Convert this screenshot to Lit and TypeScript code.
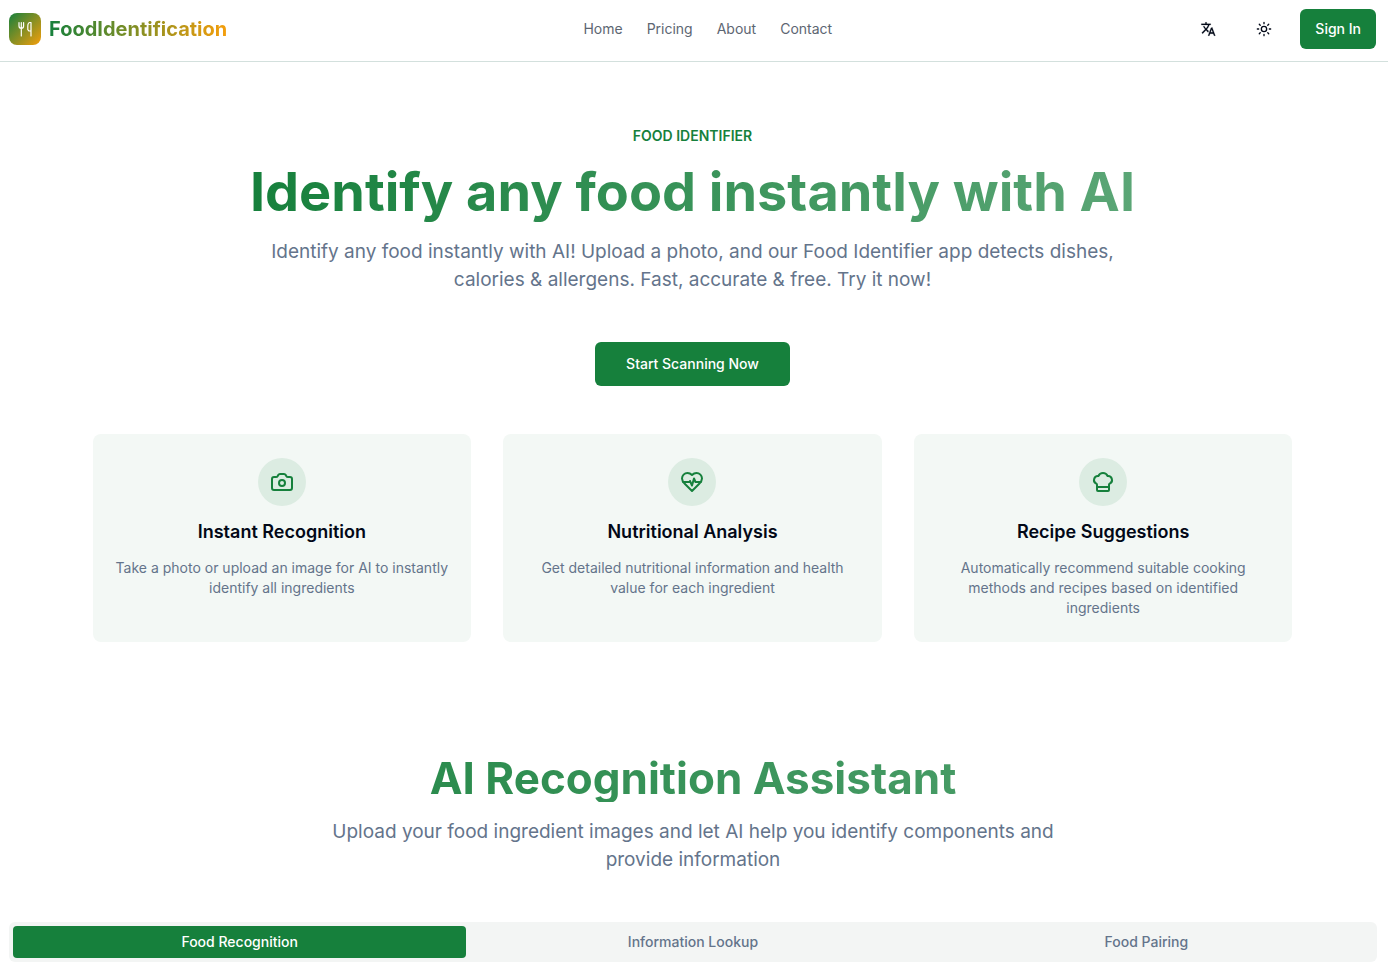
import { LitElement, html, css, svg } from "lit";
import { customElement, state } from "lit/decorators.js";
import { classMap } from "lit/directives/class-map.js";

const camera = svg`
  <path d="M13.997 4a2 2 0 0 1 1.76 1.05l.486.9A2 2 0 0 0 18.003 7H20a2 2 0 0 1 2 2v9a2 2 0 0 1-2 2H4a2 2 0 0 1-2-2V9a2 2 0 0 1 2-2h1.997a2 2 0 0 0 1.759-1.048l.489-.904A2 2 0 0 1 10.004 4z"></path>
  <circle cx="12" cy="13" r="3"></circle>`;

const heartPulse = svg`
  <path d="M19 14c1.49-1.46 3-3.21 3-5.5A5.5 5.5 0 0 0 16.5 3c-1.76 0-3 .5-4.5 2-1.5-1.5-2.74-2-4.5-2A5.5 5.5 0 0 0 2 8.5c0 2.3 1.5 4.05 3 5.5l7 7Z"></path>
  <path d="M3.22 12H9.5l.5-1 2 4.5 2-7 1.5 3.5h5.27"></path>`;

const chefHat = svg`
  <path d="M17 21a1 1 0 0 0 1-1v-5.35c0-.457.316-.844.727-1.041a4 4 0 0 0-2.134-7.589 5 5 0 0 0-9.186 0 4 4 0 0 0-2.134 7.588c.411.198.727.585.727 1.041V20a1 1 0 0 0 1 1Z"></path>
  <path d="M6 17h12"></path>`;

const FEATURES = [
  { icon: camera, title: "Instant Recognition", text: "Take a photo or upload an image for AI to instantly identify all ingredients" },
  { icon: heartPulse, title: "Nutritional Analysis", text: "Get detailed nutritional information and health value for each ingredient" },
  { icon: chefHat, title: "Recipe Suggestions", text: "Automatically recommend suitable cooking methods and recipes based on identified ingredients" },
];

const TABS = ["Food Recognition", "Information Lookup", "Food Pairing"];

@customElement("app-root")
export class AppRoot extends LitElement {
  @state() private activeTab = 0;

  static styles = css`
    :host {
      display: block;
      background: #ffffff;
      color: #020817;
      font-family: Inter, "Liberation Sans", sans-serif;
      font-size: 14px;
      line-height: 20px;
    }
    h1, h2, h3, p { margin: 0; }
    a { color: inherit; text-decoration: none; }
    button {
      border: 0;
      padding: 0;
      background: none;
      color: inherit;
      font: inherit;
      cursor: pointer;
    }
    svg { display: block; fill: none; stroke: currentColor; stroke-width: 2; stroke-linecap: round; stroke-linejoin: round; }

    .header {
      display: flex;
      align-items: center;
      justify-content: space-between;
      padding: 9px 12px 12px 9px;
      border-bottom: 1px solid #d3e0dd;
    }
    .brand { display: flex; align-items: center; gap: 8px; }
    .mark {
      display: grid;
      place-items: center;
      width: 32px;
      height: 32px;
      border-radius: 8px;
      background: linear-gradient(to bottom right, #16803c, #f59e0b);
      color: #ffffff;
    }
    .utensils { stroke-width: 1.2; }
    .translate { fill: currentColor; stroke-width: 0.3; }
    .name {
      font-size: 20px;
      line-height: 28px;
      font-weight: 700;
      background: linear-gradient(to right, #16803c, #f59e0b);
      background-clip: text;
      -webkit-background-clip: text;
      color: transparent;
    }
    .nav { display: flex; gap: 24px; color: #5d6672; }
    .actions { display: flex; gap: 16px; }
    .icon-button { display: grid; place-items: center; width: 40px; height: 40px; border-radius: 6px; }
    .solid { background: #16803c; color: #ffffff; font-weight: 500; border-radius: 6px; }
    .sign-in { height: 40px; padding: 0 15px; }

    .hero {
      display: flex;
      flex-direction: column;
      align-items: center;
      padding: 64px 12px 64px 9px;
      text-align: center;
    }
    .eyebrow { color: #16803c; font-weight: 600; }
    .title, .subtitle {
      font-weight: 700;
      background: linear-gradient(to right, #16803c, #5ba676);
      background-clip: text;
      -webkit-background-clip: text;
      color: transparent;
    }
    .title { margin-top: 16px; font-size: 54px; line-height: 60px; }
    .subtitle { align-self: stretch; font-size: 44px; line-height: 48px; }
    .lead {
      margin-top: 16px;
      max-width: 900px;
      font-size: 19px;
      line-height: 28px;
      color: #64748b;
    }
    .lead.narrow { max-width: 752px; }
    .start { margin-top: 48px; height: 44px; padding: 0 31px; }

    .features {
      display: grid;
      grid-template-columns: repeat(3, 1fr);
      gap: 32px;
      width: 100%;
      max-width: 1200px;
      margin-top: 48px;
    }
    .card {
      display: flex;
      flex-direction: column;
      align-items: center;
      gap: 12px;
      padding: 24px 20px;
      border-radius: 8px;
      background: #f3f8f5;
    }
    .badge {
      display: grid;
      place-items: center;
      width: 48px;
      height: 48px;
      border-radius: 50%;
      background: #dcece2;
      color: #16803c;
    }
    .card-title { font-size: 18px; line-height: 28px; font-weight: 600; }
    .card-text { color: #64748b; }

    .assistant {
      display: flex;
      flex-direction: column;
      align-items: center;
      padding: 48px 11px 0 9px;
      text-align: center;
    }
    .tabs {
      display: grid;
      grid-template-columns: repeat(3, 1fr);
      align-self: stretch;
      margin-top: 48px;
      padding: 4px;
      border-radius: 6px;
      background: #f3f5f4;
      color: #64748b;
      font-weight: 500;
    }
    .tab { height: 32px; border-radius: 4px; }
    .tab.active { background: #16803c; color: #ffffff; }
  `;

  render() {
    return html`
      <header class="header">
        <a class="brand" href="#">
          <span class="mark">
            <svg class="utensils" width="16" height="16" viewBox="0 0 16 16">
              <path d="M2 1.5v3.5a2.3 2.3 0 0 0 4.6 0V1.5M4.3 1.5V15M14 15V1.5h-1c-1.5 0-2.2 1.5-2.2 4v3.2l1.2 1.3H14"></path>
            </svg>
          </span>
          <span class="name">FoodIdentification</span>
        </a>
        <nav class="nav">
          <a href="#">Home</a>
          <a href="#">Pricing</a>
          <a href="#">About</a>
          <a href="#">Contact</a>
        </nav>
        <div class="actions">
          <button class="icon-button" aria-label="Language">
            <svg class="translate" width="16" height="16" viewBox="0 0 24 24">
              <path d="M12.87 15.07l-2.54-2.51.03-.03c1.74-1.94 2.98-4.17 3.71-6.53H16V4h-6V2H8v2H2v1.99h10.17C11.5 7.92 10.44 9.75 9 11.35 8.07 10.32 7.3 9.19 6.69 8h-2c.73 1.63 1.73 3.17 2.98 4.56l-5.09 5.02L4 19l5-5 3.11 3.11.76-2.04zM18.5 10h-2L12 22h2l1.12-3h4.75L21 22h2l-4.5-12zm-2.62 7l1.62-4.33L19.12 17h-3.24z"></path>
            </svg>
          </button>
          <button class="icon-button" aria-label="Theme">
            <svg width="16" height="16" viewBox="0 0 24 24">
              <circle cx="12" cy="12" r="4"></circle>
              <path d="M12 2v2M12 20v2M4.93 4.93l1.41 1.41M17.66 17.66l1.41 1.41M2 12h2M20 12h2M6.34 17.66l-1.41 1.41M19.07 4.93l-1.41 1.41"></path>
            </svg>
          </button>
          <button class="solid sign-in">Sign In</button>
        </div>
      </header>

      <main>
        <section class="hero">
          <p class="eyebrow">FOOD IDENTIFIER</p>
          <h1 class="title">Identify any food instantly with AI</h1>
          <p class="lead">
            Identify any food instantly with AI! Upload a photo, and our Food Identifier app detects dishes, calories &amp; allergens. Fast, accurate &amp; free. Try it now!
          </p>
          <button class="solid start">Start Scanning Now</button>
          <div class="features">
            ${FEATURES.map(
              (feature) => html`
                <article class="card">
                  <span class="badge"><svg width="24" height="24" viewBox="0 0 24 24">${feature.icon}</svg></span>
                  <h3 class="card-title">${feature.title}</h3>
                  <p class="card-text">${feature.text}</p>
                </article>
              `
            )}
          </div>
        </section>

        <section class="assistant">
          <h2 class="subtitle">AI Recognition Assistant</h2>
          <p class="lead narrow">Upload your food ingredient images and let AI help you identify components and provide information</p>
          <div class="tabs" role="tablist">
            ${TABS.map(
              (tab, i) => html`
                <button
                  class=${classMap({ tab: true, active: i === this.activeTab })}
                  role="tab"
                  aria-selected=${i === this.activeTab ? "true" : "false"}
                  @click=${() => (this.activeTab = i)}
                >${tab}</button>
              `
            )}
          </div>
        </section>
      </main>
    `;
  }
}
